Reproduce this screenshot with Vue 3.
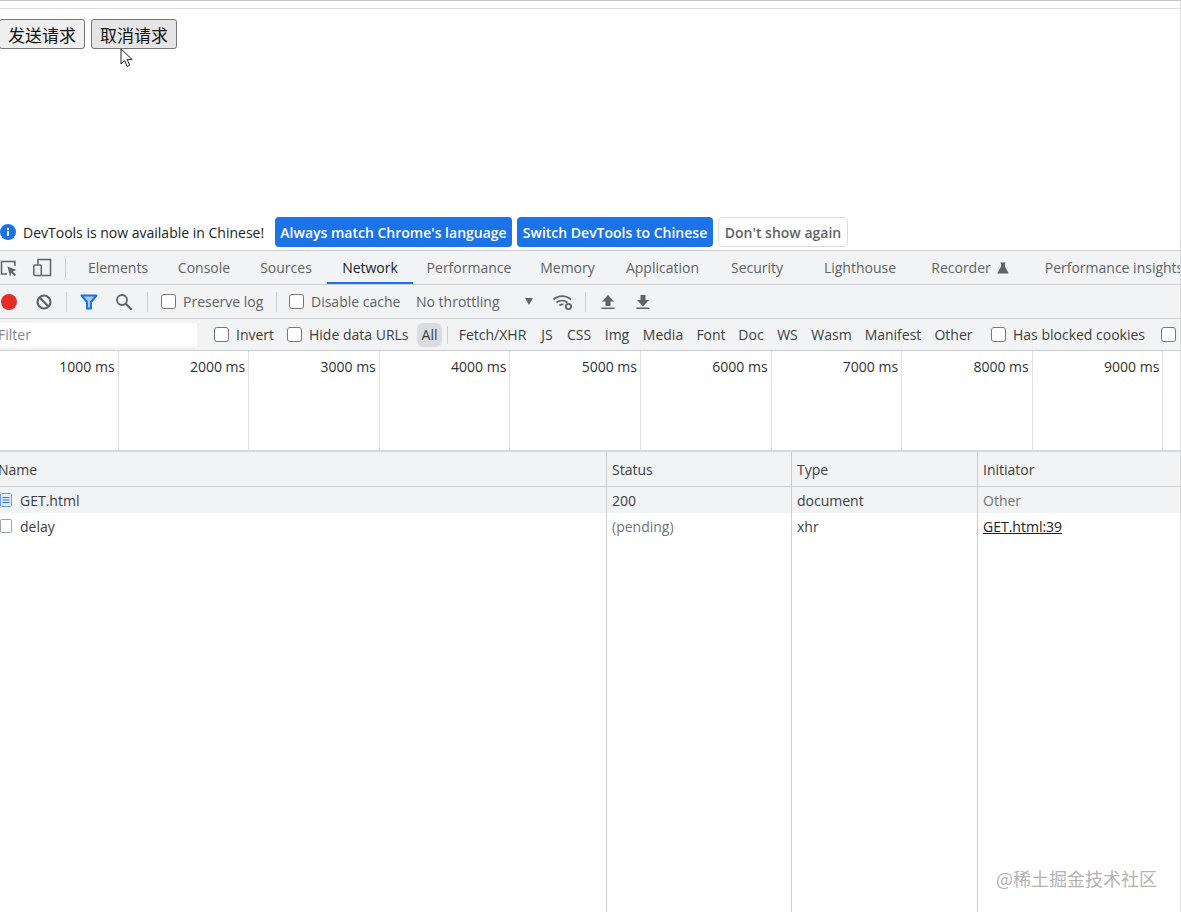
<script setup>
const tabs = [
  { name: 'Elements', w: 90 },
  { name: 'Console', w: 82 },
  { name: 'Sources', w: 82 },
  { name: 'Network', w: 86, active: true },
  { name: 'Performance', w: 112 },
  { name: 'Memory', w: 85 },
  { name: 'Application', w: 105 },
  { name: 'Security', w: 94 },
  { name: 'Lighthouse', w: 102 },
  { name: 'Recorder', w: 118, flask: true },
  { name: 'Performance insights', w: 170 }
]
const filters = [
  { name: 'Fetch/XHR', w: 83 },
  { name: 'JS', w: 26 },
  { name: 'CSS', w: 38 },
  { name: 'Img', w: 38 },
  { name: 'Media', w: 54 },
  { name: 'Font', w: 42 },
  { name: 'Doc', w: 38 },
  { name: 'WS', w: 35 },
  { name: 'Wasm', w: 53 },
  { name: 'Manifest', w: 70 },
  { name: 'Other', w: 51 }
]
const marks = [1000, 2000, 3000, 4000, 5000, 6000, 7000, 8000, 9000]
</script>

<template>
  <div class="page">
    <div class="topbar"></div>
    <div class="demo">
      <button class="demo-btn first">发送请求</button>
      <button class="demo-btn hover">取消请求</button>
    </div>

    <div class="infobar">
      <svg class="info-icon" viewBox="0 0 16 16" width="16" height="16">
        <circle cx="8" cy="8" r="8" fill="#1a73e8" />
        <rect x="7" y="7" width="2" height="5" fill="#fff" />
        <rect x="7" y="4" width="2" height="2" fill="#fff" />
      </svg>
      <span class="info-text">DevTools is now available in Chinese!</span>
      <button class="info-btn primary lang">Always match Chrome's language</button>
      <button class="info-btn primary switch">Switch DevTools to Chinese</button>
      <button class="info-btn plain">Don't show again</button>
    </div>

    <div class="tabbar">
      <svg class="tool-icon inspect" viewBox="0 0 20 20" width="20" height="20">
        <path d="M8 16H2.5V3.500H16V8" fill="none" stroke="#5f6368" stroke-width="1.500" />
        <path d="M8.500 8.500l9 3.500-3.700 1.500 3.200 3.200-1.300 1.300-3.200-3.200-1.500 3.700z" fill="#5f6368" />
      </svg>
      <svg class="tool-icon device" viewBox="0 0 20 20" width="20" height="20">
        <path d="M6 6V1.500h12.500v16H10" fill="none" stroke="#5f6368" stroke-width="1.500" />
        <rect x="1.800" y="7" width="7.500" height="10.500" rx="1" fill="none" stroke="#5f6368" stroke-width="1.500" />
      </svg>
      <span class="sep tab-sep"></span>
      <div
        v-for="tab in tabs"
        :key="tab.name"
        class="tab"
        :class="{ active: tab.active, security: tab.name === 'Security' }"
        :style="{ width: tab.w + 'px' }"
      >
        {{ tab.name }}
        <svg v-if="tab.flask" class="flask" viewBox="0 0 12 12" width="12" height="12">
          <path d="M3.500 0.500h5v1H8v3l3.500 6.500v0.500H0.500V11L4 4.500v-3h-0.500z" fill="#5f6368" />
        </svg>
      </div>
    </div>

    <div class="toolbar">
      <span class="record"></span>
      <svg class="clear" viewBox="0 0 16 16" width="16" height="16">
        <circle cx="8" cy="8" r="6.500" fill="none" stroke="#5f6368" stroke-width="2.200" />
        <path d="M3.500 3.500l9 9" stroke="#5f6368" stroke-width="2.200" />
      </svg>
      <span class="sep sep-a"></span>
      <svg class="funnel" viewBox="0 0 18 16" width="18" height="16">
        <path d="M1.500 1.500h15L11 8v6.500H7V8z" fill="#a8c7fa" stroke="#1a73e8" stroke-width="2" stroke-linejoin="round" />
      </svg>
      <svg class="search" viewBox="0 0 18 18" width="18" height="18">
        <circle cx="7" cy="7" r="5" fill="none" stroke="#5f6368" stroke-width="1.800" />
        <path d="M10.800 10.800l6 6" stroke="#5f6368" stroke-width="2.200" />
      </svg>
      <span class="sep sep-b"></span>
      <label class="check preserve"><span class="box"></span>Preserve log</label>
      <span class="sep sep-c"></span>
      <label class="check disable"><span class="box"></span>Disable cache</label>
      <span class="throttle">No throttling</span>
      <span class="caret"></span>
      <svg class="wifi" viewBox="0 0 22 18" width="22" height="18">
        <path d="M1.500 6.500a13 13 0 0 1 17.500 0M4.500 9.500a9 9 0 0 1 11 0M7.500 12.500a5 5 0 0 1 4 -1" fill="none" stroke="#5f6368" stroke-width="1.800" />
        <circle cx="16.500" cy="13.500" r="2.600" fill="none" stroke="#5f6368" stroke-width="1.800" />
      </svg>
      <span class="sep sep-d"></span>
      <svg class="arrow up" viewBox="0 0 14 16" width="14" height="16">
        <path d="M7 1l6 6.500H9.500V12h-5V7.500H1zM0.500 13.500h13V15H0.500z" fill="#5f6368" />
      </svg>
      <svg class="arrow down" viewBox="0 0 14 16" width="14" height="16">
        <path d="M4.500 1h5v5H13l-6 6.500L1 6h3.500zM0.500 13.500h13V15H0.500z" fill="#5f6368" />
      </svg>
    </div>

    <div class="filterbar">
      <div class="filter-input">Filter</div>
      <label class="check dark invert"><span class="box"></span>Invert</label>
      <label class="check dark hide"><span class="box"></span>Hide data URLs</label>
      <span class="chip">All</span>
      <span class="sep sep-f"></span>
      <span
        v-for="f in filters"
        :key="f.name"
        class="type"
        :style="{ width: f.w + 'px' }"
      >{{ f.name }}</span>
      <label class="check dark blocked"><span class="box"></span>Has blocked cookies</label>
      <span class="box last"></span>
    </div>

    <div class="timeline">
      <div v-for="m in marks" :key="m" class="mark">{{ m }} ms</div>
    </div>

    <div class="grid">
      <div class="row head">
        <div class="cell name clip">Name</div>
        <div class="cell status">Status</div>
        <div class="cell kind">Type</div>
        <div class="cell init">Initiator</div>
      </div>
      <div class="row zebra">
        <div class="cell name">
          <svg class="file" viewBox="0 0 12 14" width="12" height="14">
            <rect x="0.500" y="0.500" width="11" height="13" rx="1" fill="#e8f0fe" stroke="#669df6" />
            <path d="M2.500 4.500h7M2.500 7h7M2.500 9.500h7" stroke="#1a73e8" stroke-width="1.200" />
          </svg>
          GET.html
        </div>
        <div class="cell status">200</div>
        <div class="cell kind">document</div>
        <div class="cell init muted">Other</div>
      </div>
      <div class="row">
        <div class="cell name">
          <svg class="file" viewBox="0 0 12 14" width="12" height="14">
            <rect x="0.500" y="0.500" width="11" height="13" rx="1" fill="#fff" stroke="#9aa0a6" />
          </svg>
          delay
        </div>
        <div class="cell status muted">(pending)</div>
        <div class="cell kind">xhr</div>
        <div class="cell init link">GET.html:39</div>
      </div>
      <div class="row filler">
        <div class="cell name"></div>
        <div class="cell status"></div>
        <div class="cell kind"></div>
        <div class="cell init"></div>
      </div>
    </div>

    <svg class="cursor" viewBox="0 0 14 20" width="14" height="20">
      <path d="M1 1v15l3.600-3.400 2.500 5.800 2.600-1.100-2.500-5.700h5z" fill="#fff" stroke="#222" stroke-width="1" />
    </svg>
    <div class="watermark">@稀土掘金技术社区</div>
  </div>
</template>

<style scoped>
.page {
  position: relative;
  width: 1181px;
  height: 912px;
  overflow: hidden;
  display: flex;
  flex-direction: column;
  background: #fff;
  box-sizing: border-box;
  border-right: 1px solid #dcdcdc;
  font-family: "Open Sans", "Noto Sans CJK SC", sans-serif;
  font-size: 14px;
  color: #3c4043;
}
.topbar {
  height: 8px;
  flex: none;
  border-top: 1px solid #c4c4c4;
  border-bottom: 1px solid #dedede;
  box-sizing: content-box;
  height: 7px;
}
.demo {
  height: 205px;
  flex: none;
  box-sizing: border-box;
  padding-top: 10px;
  display: flex;
  align-items: flex-start;
  gap: 6px;
}
.demo-btn {
  height: 30px;
  width: 86px;
  padding: 0;
  background: #efefef;
  border: 1px solid #767676;
  border-radius: 3px;
  font-family: "Noto Sans CJK SC", sans-serif;
  font-size: 17px;
  color: #111;
}
.demo-btn.first {
  margin-left: -1px;
}
.demo-btn.hover {
  background: #e5e5e5;
}
.infobar {
  height: 36px;
  flex: none;
  display: flex;
  align-items: center;
}
.info-icon {
  flex: none;
}
.info-text {
  margin-left: 7px;
  width: 252px;
  color: #202124;
  white-space: nowrap;
}
.info-btn {
  height: 30px;
  padding: 0;
  border-radius: 4px;
  font-family: inherit;
  font-size: 14px;
  font-weight: 600;
  white-space: nowrap;
  margin-right: 5px;
}
.primary {
  background: #1a73e8;
  border: 0;
  color: #fff;
}
.lang {
  width: 237px;
}
.switch {
  width: 196px;
}
.plain {
  width: 130px;
  background: #fff;
  border: 1px solid #dadce0;
  color: #5f6368;
}
.tabbar {
  height: 35px;
  flex: none;
  box-sizing: border-box;
  display: flex;
  align-items: center;
  background: #f1f3f4;
  border-top: 1px solid #cbcdd1;
  border-bottom: 1px solid #cbcdd1;
}
.tool-icon {
  flex: none;
}
.inspect {
  margin-left: -1px;
}
.device {
  margin-left: 13px;
}
.sep {
  flex: none;
  display: inline-block;
  width: 1px;
  height: 20px;
  background: #cbcdd1;
}
.tab-sep {
  margin: 0 7px 0 13px;
}
.tab {
  flex: none;
  height: 100%;
  box-sizing: border-box;
  display: flex;
  align-items: center;
  justify-content: center;
  gap: 6px;
  color: #5f6368;
  white-space: nowrap;
}
.tab.active {
  color: #202124;
  border-bottom: 2px solid #1a73e8;
  padding-top: 2px;
}
.tab.security {
  padding-right: 10px;
}
.flask {
  flex: none;
}
.toolbar {
  height: 34px;
  flex: none;
  box-sizing: border-box;
  display: flex;
  align-items: center;
  background: #f1f3f4;
  border-bottom: 1px solid #cbcdd1;
  color: #5f6368;
}
.record {
  flex: none;
  width: 16px;
  height: 16px;
  margin-left: 1px;
  border-radius: 50%;
  background: #e52d27;
}
.clear {
  flex: none;
  margin-left: 19px;
}
.sep-a {
  margin-left: 14px;
}
.funnel {
  flex: none;
  margin-left: 13px;
}
.search {
  flex: none;
  margin-left: 17px;
}
.sep-b {
  margin-left: 14px;
}
.check {
  display: flex;
  align-items: center;
  gap: 7px;
  flex: none;
  white-space: nowrap;
}
.dark {
  color: #3c4043;
}
.box {
  flex: none;
  box-sizing: border-box;
  display: inline-block;
  width: 15px;
  height: 15px;
  background: #fff;
  border: 1px solid #767676;
  border-radius: 3px;
}
.preserve {
  margin-left: 13px;
  width: 115px;
}
.disable {
  margin-left: 12px;
  width: 127px;
}
.throttle {
  flex: none;
  width: 108px;
  white-space: nowrap;
}
.caret {
  flex: none;
  width: 0;
  height: 0;
  border-left: 4px solid transparent;
  border-right: 4px solid transparent;
  border-top: 7px solid #5f6368;
  margin-left: 1px;
}
.wifi {
  flex: none;
  margin-left: 19px;
}
.sep-d {
  margin-left: 11px;
}
.arrow {
  flex: none;
}
.up {
  margin-left: 15px;
}
.down {
  margin-left: 21px;
}
.filterbar {
  height: 32px;
  flex: none;
  box-sizing: border-box;
  display: flex;
  align-items: center;
  background: #f1f3f4;
  border-bottom: 1px solid #cbcdd1;
}
.filter-input {
  flex: none;
  box-sizing: border-box;
  width: 197px;
  height: 24px;
  line-height: 24px;
  background: #fff;
  color: #80868b;
  text-indent: -2px;
}
.invert {
  margin-left: 17px;
  width: 73px;
}
.hide {
  width: 130px;
}
.chip {
  flex: none;
  width: 25px;
  height: 24px;
  line-height: 24px;
  text-align: center;
  background: #dadce0;
  border-radius: 6px;
}
.sep-f {
  height: 18px;
  margin: 0 3px 0 5px;
}
.type {
  flex: none;
  text-align: center;
  white-space: nowrap;
}
.blocked {
  margin-left: 12px;
  width: 170px;
}
.timeline {
  height: 101px;
  flex: none;
  box-sizing: border-box;
  display: flex;
  margin-left: -12px;
  border-bottom: 2px solid #d8d9db;
}
.mark {
  flex: none;
  box-sizing: border-box;
  width: 130.600px;
  padding: 6px 3px 0 0;
  text-align: right;
  color: #303134;
  border-right: 1px solid #dfe1e5;
  white-space: nowrap;
}
.grid {
  flex: 1;
  display: flex;
  flex-direction: column;
  min-height: 0;
}
.row {
  height: 26px;
  flex: none;
  display: grid;
  grid-template-columns: 606px 185px 186px 1fr;
}
.head {
  height: 35px;
  background: #f1f3f4;
  border-bottom: 1px solid #cbcdd1;
  box-sizing: border-box;
}
.zebra {
  background: #f1f3f4;
}
.filler {
  flex: 1;
}
.cell {
  display: flex;
  align-items: center;
  padding-left: 5px;
  gap: 8px;
  white-space: nowrap;
  border-left: 1px solid #cbcdd1;
}
.cell.name {
  border-left: 0;
  padding-left: 0;
}
.clip {
  text-indent: -2px;
}
.file {
  flex: none;
  margin-left: 0;
}
.muted {
  color: #70757a;
}
.link {
  color: #202124;
  text-decoration: underline;
}
.cursor {
  position: absolute;
  left: 120px;
  top: 48px;
}
.watermark {
  position: absolute;
  left: 996px;
  top: 865px;
  font-family: "Noto Sans CJK SC", sans-serif;
  font-size: 18px;
  color: #b3b3b3;
  white-space: nowrap;
}
</style>
